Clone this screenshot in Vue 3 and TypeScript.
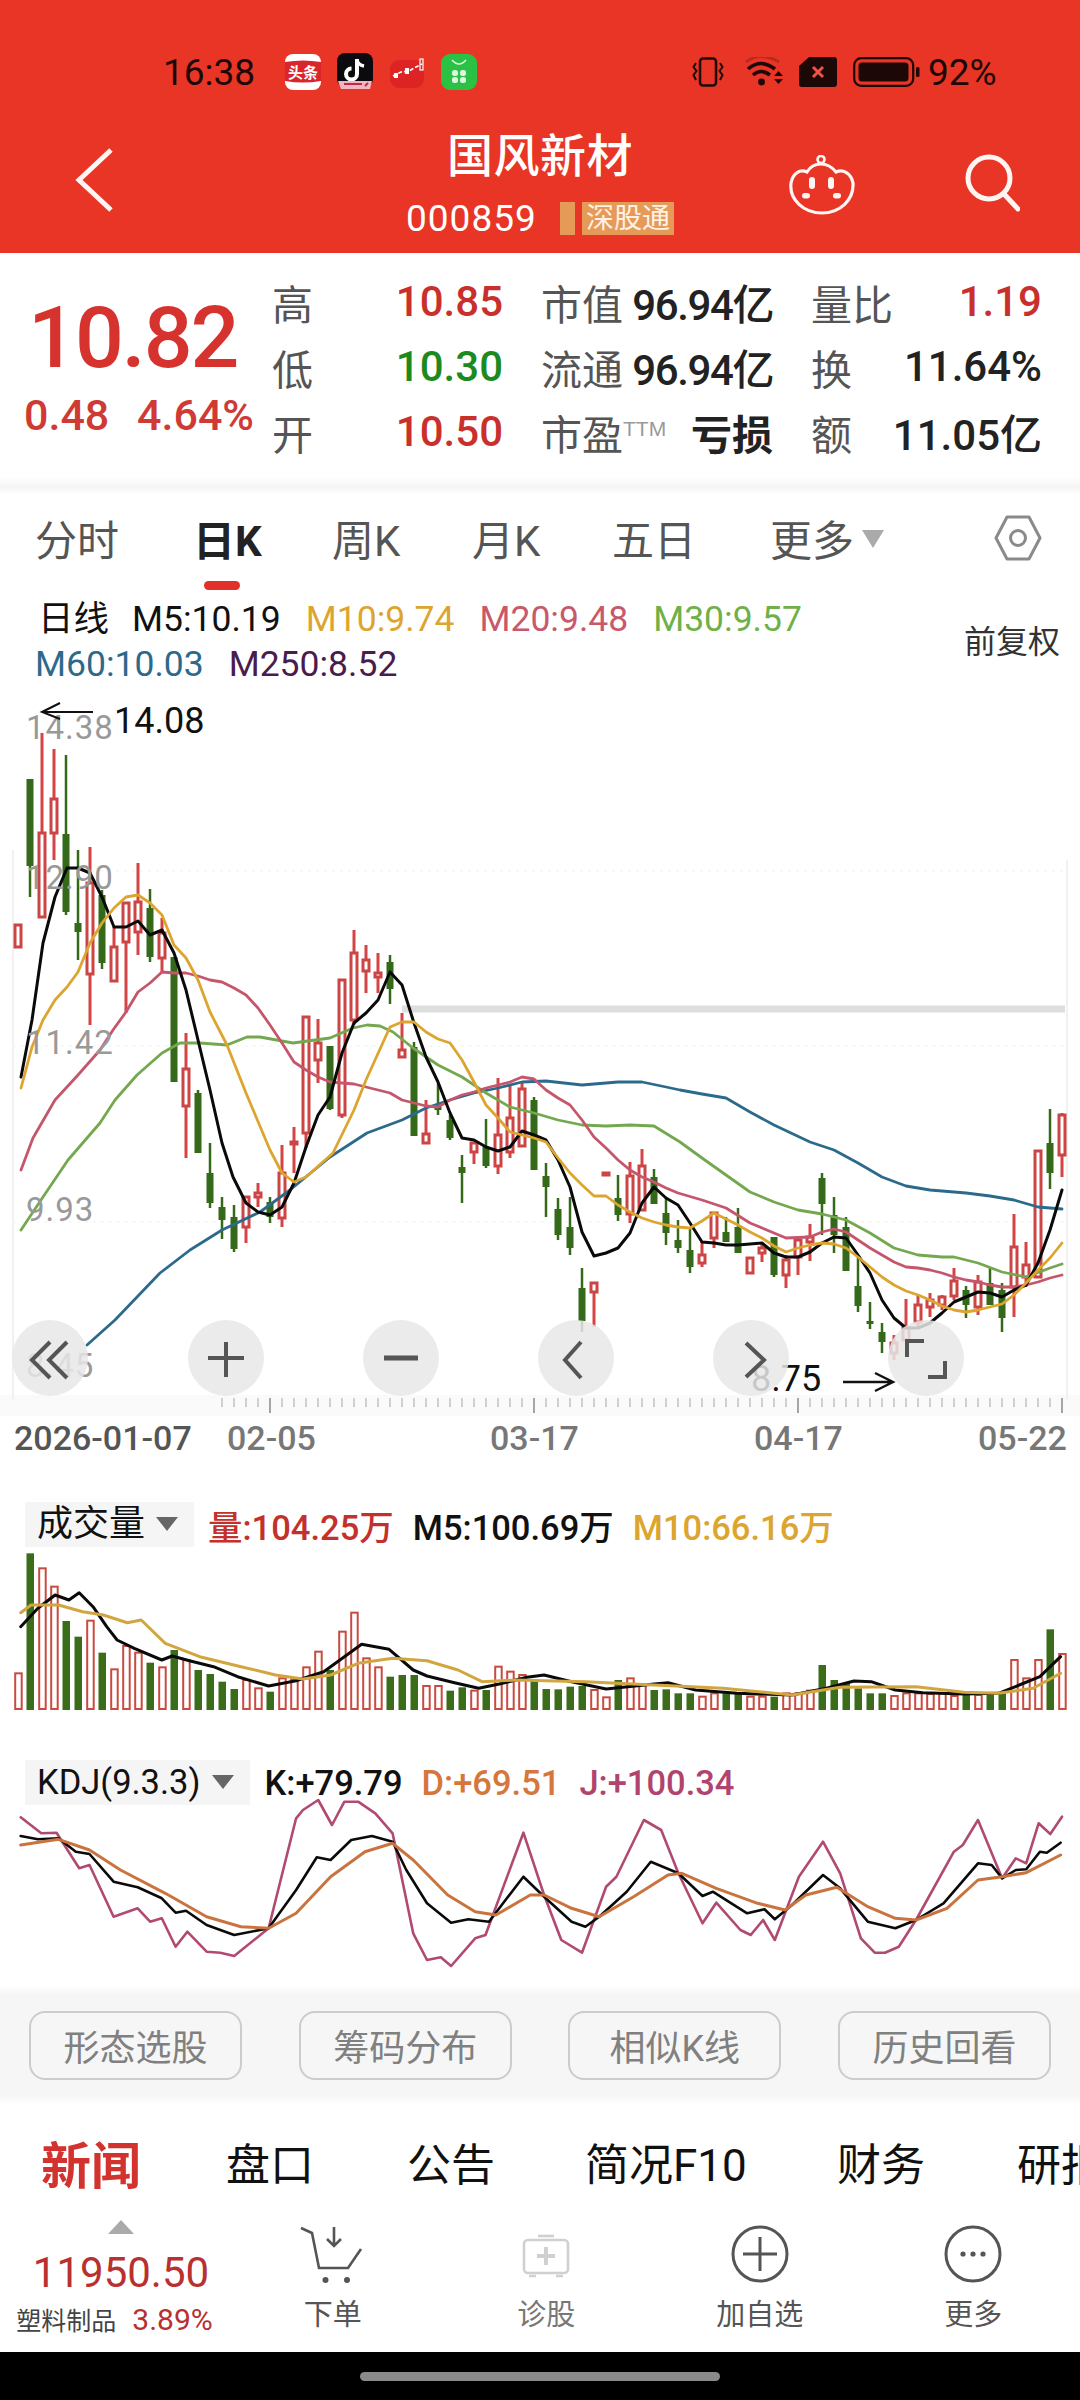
<template>
  <div class="page">
    <header class="top">
      <div class="status">
        <span class="clock">16:38</span>
        <div class="notify">
          <svg width="36" height="36" viewBox="0 0 36 36">
            <rect width="36" height="36" rx="8" fill="#fff" />
            <path d="M0 8 Q18 5 36 8 V27 Q18 30 0 27 Z" fill="#d8262c" />
            <text x="18" y="23.5" text-anchor="middle" class="mini-text">头条</text>
          </svg>
          <svg width="36" height="38" viewBox="0 0 36 38">
            <rect width="36" height="34" rx="8" fill="#0b0b0f" />
            <path d="M20 6 V21 A5.5 5.5 0 1 1 14.5 15.5" fill="none" stroke="#fff" stroke-width="4" />
            <path d="M20 7 Q21 12 27 13" fill="none" stroke="#fff" stroke-width="3.5" />
            <path d="M1 28 H35 L33 36 H4 Z" fill="#f2b6c0" />
            <path d="M7 31 H25 M28 33 L31 30" stroke="#c2274a" stroke-width="2" />
          </svg>
          <svg width="36" height="36" viewBox="0 0 36 36">
            <rect x="1" y="6" width="34" height="28" rx="9" fill="#dd2323" />
            <path d="M4 22 L12 18 L20 17 L27 13 L33 10" fill="none" stroke="#fff" stroke-width="1.6" stroke-dasharray="4 2" />
            <rect x="5" y="19" width="4" height="5" fill="#fff" />
            <rect x="16" y="14" width="4" height="6" fill="#fff" />
            <rect x="31" y="5" width="3" height="11" fill="none" stroke="#fff" stroke-width="1.2" />
          </svg>
          <svg width="36" height="36" viewBox="0 0 36 36">
            <rect width="36" height="36" rx="9" fill="#2bc144" />
            <path d="M11 6 Q18 14 25 6" fill="none" stroke="#e4f7e6" stroke-width="1.6" />
            <rect x="11" y="16" width="6" height="6" rx="2.5" fill="#dff5e2" />
            <rect x="19" y="16" width="6" height="6" rx="2.5" fill="#dff5e2" />
            <rect x="11" y="23" width="6" height="6" rx="2.5" fill="#dff5e2" />
            <rect x="19" y="23" width="6" height="6" rx="2.5" fill="#dff5e2" />
          </svg>
        </div>
        <div class="sys">
          <svg width="32" height="30" viewBox="0 0 32 30" fill="none" stroke="#1d0a08">
            <rect x="8" y="1.5" width="16" height="27" rx="3" stroke-width="2.5" />
            <path d="M4 6 L1.5 10 L4.5 14 L1.5 18 L4 23 M28 6 L30.5 10 L27.5 14 L30.5 18 L28 23" stroke-width="2" />
          </svg>
          <svg class="wifi" width="40" height="30" viewBox="0 0 40 30" fill="none" stroke="#1d0a08">
            <path d="M1 5 Q15 -6 34 5" stroke="#b92a20" stroke-width="3" />
            <path d="M3 12 Q16 1 30 12" stroke-width="3.6" />
            <path d="M8 18 Q16 11 25 18" stroke-width="3.6" />
            <circle cx="16.5" cy="25" r="3.4" fill="#1d0a08" stroke="none" />
            <path d="M29 19 L33.5 14 L38 19 Z M29 22 L33.5 27 L38 22 Z" fill="#1d0a08" stroke="none" />
          </svg>
          <svg class="sim" width="38" height="30" viewBox="0 0 38 30">
            <path d="M10 0 H35 Q38 0 38 3 V27 Q38 30 35 30 H3 Q0 30 0 27 V9 Z" fill="#1b0807" />
            <path d="M14 10 L24 20 M24 10 L14 20" stroke="#f0524a" stroke-width="3" />
          </svg>
          <svg class="battery" width="67" height="30" viewBox="0 0 67 30">
            <rect x="1.2" y="1.2" width="59" height="27.6" rx="7" fill="none" stroke="#1b0807" stroke-width="2.2" />
            <rect x="5.5" y="5.5" width="50" height="19" rx="3.5" fill="#1b0807" />
            <rect x="63" y="10" width="3.5" height="10" rx="1.5" fill="#1b0807" />
          </svg>
          <span class="pct">92%</span>
        </div>
      </div>
      <div class="nav">
        <svg class="back" width="40" height="66" viewBox="0 0 40 66">
          <path d="M36 3 L4 33 L36 63" fill="none" stroke="#fff5f2" stroke-width="5" />
        </svg>
        <div class="title">
          <div class="name">国风新材</div>
          <div class="sub">
            <span class="code">000859</span>
            <span class="stub"></span>
            <span class="tag">深股通</span>
          </div>
        </div>
        <div class="nav-right">
          <svg class="robot" width="68" height="62" viewBox="0 0 68 62" fill="none" stroke="#fff5f2" stroke-width="3.2">
            <circle cx="33" cy="4.5" r="3.5" stroke-width="2.6" />
            <path d="M33 9 C27 9 22 12 19 17 C12 14 5 18 3 28 C1 45 16 58 34 58 C52 58 66 45 65 28 C63 18 55 14 48 17 C44 12 39 9 33 9 Z" />
            <rect x="21" y="22" width="6" height="12" rx="3" fill="#fff5f2" stroke="none" />
            <rect x="40" y="22" width="6" height="12" rx="3" fill="#fff5f2" stroke="none" />
            <rect x="14" y="38" width="8" height="5.5" rx="2.7" fill="#fff5f2" stroke="none" />
            <rect x="45" y="38" width="8" height="5.5" rx="2.7" fill="#fff5f2" stroke="none" />
          </svg>
          <svg class="search" width="56" height="60" viewBox="0 0 56 60" fill="none" stroke="#fff5f2" stroke-width="5">
            <circle cx="25" cy="25" r="21" />
            <path d="M40 41 L54 56" stroke-linecap="round" />
          </svg>
        </div>
      </div>
    </header>

    <section class="quote">
      <div class="price">
        <div class="last">10.82</div>
        <div class="change"><span>0.48</span><span>4.64%</span></div>
      </div>
      <div class="stats">
        <div v-for="s in stats" :key="s.label" class="stat">
          <span class="stat-label">{{ s.label }}<sup v-if="s.sup">{{ s.sup }}</sup></span>
          <span class="stat-value" :class="s.tone">{{ s.value }}</span>
        </div>
      </div>
    </section>
    <div class="rule"></div>

    <nav class="periods">
      <span v-for="p in periods" :key="p" class="period" :class="{ on: p === '日K' }">
        {{ p }}<i v-if="p === '更多'" class="drop"></i>
      </span>
      <svg width="48" height="46" viewBox="0 0 48 46" fill="none" stroke="#8a8a8a" stroke-width="3">
        <path d="M13 2 H35 L46 23 L35 44 H13 L2 23 Z" stroke-linejoin="round" />
        <circle cx="24" cy="23" r="7.5" />
      </svg>
    </nav>

    <div class="legend">
      <div class="ma-rows">
        <div class="ma-row">
          <span class="cjk">日线</span>
          <span>M5:10.19</span>
          <span class="c-m10">M10:9.74</span>
          <span class="c-m20">M20:9.48</span>
          <span class="c-m30">M30:9.57</span>
        </div>
        <div class="ma-row">
          <span class="c-m60">M60:10.03</span>
          <span class="c-m250">M250:8.52</span>
        </div>
      </div>
      <span class="adjust">前复权</span>
    </div>

    <svg class="kline" width="1080" height="716" viewBox="0 700 1080 716">
      <rect x="0" y="1395" width="1080" height="21" fill="#fafafa" />
      <path d="M13 850 V1400 M1067 860 V1400" stroke="#f1f1f1" stroke-width="2" />
      <path d="M60 871 H1067 M13 1046 H1067 M13 1222 H1067" stroke="#f6f6f6" stroke-width="1.5" stroke-dasharray="3 5" />
      <rect x="402" y="1005.5" width="663" height="7" fill="#dedede" />

      <g v-for="(c, i) in candles" :key="i">
        <template v-if="c[0]">
          <path :d="`M${cx(i)} ${c[1]} V${c[2]} M${cx(i)} ${c[3]} V${c[4]}`" stroke="#d44444" stroke-width="3" />
          <rect :x="cx(i) - 3" :y="c[2]" width="6" :height="Math.max(c[3] - c[2], 2)" fill="#fff" stroke="#cc4545" stroke-width="3" />
        </template>
        <template v-else>
          <path :d="`M${cx(i)} ${c[1]} V${c[4]}`" stroke="#35691a" stroke-width="2.5" />
          <rect :x="cx(i) - 3.5" :y="c[2]" width="7" :height="c[3] - c[2]" fill="#35691a" />
        </template>
      </g>

      <polyline :points="m60" class="ma" stroke="#2c6a8c" stroke-width="2.8" />
      <polyline :points="m30" class="ma" stroke="#74a84f" stroke-width="2.8" />
      <polyline :points="m20" class="ma" stroke="#c5566c" stroke-width="2.8" />
      <polyline :points="m5" class="ma" stroke="#0a0a0a" stroke-width="3" />
      <polyline :points="m10" class="ma" stroke="#dca52f" stroke-width="2.8" />

      <text x="26" y="739" class="axis">14.38</text>
      <text x="26" y="889" class="axis">12.90</text>
      <text x="26" y="1054" class="axis">11.42</text>
      <text x="26" y="1221" class="axis">9.93</text>
      <text x="26" y="1377" class="axis">8.45</text>

      <path d="M93 712 H42 M60 703 L42 712 L60 719" fill="none" stroke="#111" stroke-width="2" />
      <text x="114" y="733" class="extreme">14.08</text>
      <text x="751" y="1391" class="extreme">8.75</text>
      <path d="M843 1382 H893 M875 1373 L893 1382 L875 1391" fill="none" stroke="#111" stroke-width="2.4" />

      <circle v-for="b in buttons" :key="b" :cx="b" cy="1358" r="38" fill="rgba(232,232,232,.85)" />
      <g fill="none" stroke="#555" stroke-width="4">
        <path d="M50 1342 L32 1360 L50 1378 M67 1342 L49 1360 L67 1378" />
        <path d="M208 1358 H244 M226 1342 V1377" />
        <path d="M384 1358 H418" stroke-width="5" />
        <path d="M581 1342 L565 1360 L581 1378" />
        <path d="M746 1343 L764 1360 L746 1377" />
        <path d="M907 1357 V1341 H924 M928 1377 H945 V1361" />
      </g>

      <line v-for="t in ticks" :key="t" :x1="t" :x2="t" y1="1398" :y2="(t - 270) % 264 === 0 ? 1413 : 1407" stroke="#a5a5a5" :stroke-width="(t - 270) % 264 === 0 ? 2 : 1" />
    </svg>

    <div class="dates">
      <span class="first">2026-01-07</span>
      <span>02-05</span>
      <span>03-17</span>
      <span>04-17</span>
      <span>05-22</span>
    </div>

    <div class="pane-head vol-head">
      <div class="picker">成交量<i class="drop dark"></i></div>
      <span class="c-red">量:104.25万</span>
      <span>M5:100.69万</span>
      <span class="c-m10">M10:66.16万</span>
    </div>
    <svg class="vol" width="1080" height="170" viewBox="0 1550 1080 170">
      <template v-for="(b, i) in volumes" :key="i">
        <rect v-if="b[0]" :x="cx(i) - 2.8" :y="topOf(b[1])" width="6.5" :height="1709 - topOf(b[1])" fill="#fff" stroke="#c94a40" stroke-width="2" />
        <rect v-else :x="cx(i) - 3.5" :y="topOf(b[1])" width="7.5" :height="1710 - topOf(b[1])" fill="#3b6c1a" />
      </template>
      <polyline :points="volM5" class="ma" stroke="#0a0a0a" stroke-width="3" />
      <polyline :points="volM10" class="ma" stroke="#d2a63f" stroke-width="3" />
    </svg>

    <div class="pane-head kdj-head">
      <div class="picker">KDJ(9.3.3)<i class="drop dark"></i></div>
      <span>K:+79.79</span>
      <span class="c-d">D:+69.51</span>
      <span class="c-j">J:+100.34</span>
    </div>
    <svg class="kdj" width="1080" height="175" viewBox="0 1805 1080 175">
      <polyline :points="kdjJ" class="ma" stroke="#b04a72" stroke-width="2.6" />
      <polyline :points="kdjK" class="ma" stroke="#0a0a0a" stroke-width="2.6" />
      <polyline :points="kdjD" class="ma" stroke="#c9743f" stroke-width="3" />
    </svg>

    <div class="tools">
      <button v-for="t in tools" :key="t" class="tool">{{ t }}</button>
    </div>

    <nav class="news">
      <span class="hot">新闻</span>
      <span>盘口</span>
      <span>公告</span>
      <span>简况F10</span>
      <span>财务</span>
      <span>研报</span>
    </nav>

    <footer class="actions">
      <div class="sector">
        <i class="up"></i>
        <div class="index">11950.50</div>
        <div class="sector-line"><span class="sector-name">塑料制品</span><span class="sector-pct">3.89%</span></div>
      </div>
      <div class="action">
        <svg width="72" height="64" viewBox="300 2224 72 64" fill="none" stroke="#555" stroke-width="2.6">
          <path d="M304 2228 L315 2233 L322 2268 H351 L364 2249" />
          <path d="M337 2227 V2246 M330 2239 L337 2246 L344 2239" />
          <circle cx="328.5" cy="2280" r="3" fill="#555" stroke="none" />
          <circle cx="350" cy="2280" r="3" fill="#555" stroke="none" />
        </svg>
        <span>下单</span>
      </div>
      <div class="action faded">
        <svg width="72" height="64" viewBox="511 2224 72 64" fill="none" stroke="#d0d0d0" stroke-width="2.6">
          <rect x="525" y="2240" width="44" height="33" rx="4" />
          <path d="M539 2236 H555" />
          <path d="M530 2276 H537 M557 2276 H564" />
          <path d="M538 2256 H556 M547 2247 V2265" stroke-width="4" />
        </svg>
        <span>诊股</span>
      </div>
      <div class="action">
        <svg width="72" height="64" viewBox="724 2224 72 64" fill="none" stroke="#555" stroke-width="3">
          <circle cx="760" cy="2254" r="27" />
          <path d="M743 2254 H777 M760 2237 V2271" />
        </svg>
        <span>加自选</span>
      </div>
      <div class="action">
        <svg width="72" height="64" viewBox="937 2224 72 64" fill="none" stroke="#555" stroke-width="3">
          <circle cx="973" cy="2254" r="27" />
          <circle cx="963" cy="2254" r="2.6" fill="#555" stroke="none" />
          <circle cx="973" cy="2254" r="2.6" fill="#555" stroke="none" />
          <circle cx="983" cy="2254" r="2.6" fill="#555" stroke="none" />
        </svg>
        <span>更多</span>
      </div>
    </footer>

    <div class="home"><div class="pill"></div></div>
  </div>
</template>

<script setup lang="ts">
type Candle = [number, number, number, number, number]

const stats = [
  { label: '高', value: '10.85', tone: 'rise' },
  { label: '市值', value: '96.94亿', tone: 'tight' },
  { label: '量比', value: '1.19', tone: 'rise' },
  { label: '低', value: '10.30', tone: 'fall' },
  { label: '流通', value: '96.94亿', tone: 'tight' },
  { label: '换', value: '11.64%', tone: '' },
  { label: '开', value: '10.50', tone: 'rise' },
  { label: '市盈', sup: 'TTM', value: '亏损', tone: 'strong' },
  { label: '额', value: '11.05亿', tone: '' },
]

const periods = ['分时', '日K', '周K', '月K', '五日', '更多']
const tools = ['形态选股', '筹码分布', '相似K线', '历史回看']
const buttons = [50, 226, 401, 576, 751, 926]
const ticks = Array.from({ length: 71 }, (_, i) => 222 + i * 12)

const cx = (i: number) => 18 + i * 12

// [rising, high, body top, body bottom, low] in chart pixels
const candles: Candle[] = [
  [1, 925, 925, 947, 947], [0, 779, 779, 866, 897], [1, 733, 833, 917, 917], [1, 749, 799, 833, 860],
  [0, 755, 834, 912, 915], [0, 850, 923, 932, 960], [1, 847, 883, 974, 1025], [0, 890, 895, 963, 969],
  [1, 927, 947, 981, 981], [1, 902, 903, 942, 1013], [1, 863, 902, 932, 955], [0, 889, 908, 957, 962],
  [1, 918, 933, 958, 972], [0, 957, 957, 1082, 1082], [1, 1033, 1069, 1106, 1158], [0, 1090, 1093, 1153, 1153],
  [0, 1143, 1173, 1203, 1208], [0, 1197, 1207, 1220, 1239], [0, 1205, 1217, 1249, 1252], [1, 1197, 1197, 1227, 1243],
  [1, 1183, 1193, 1197, 1207], [0, 1197, 1202, 1217, 1223], [1, 1145, 1173, 1218, 1227], [1, 1127, 1142, 1144, 1173],
  [1, 1017, 1017, 1133, 1148], [1, 1019, 1043, 1060, 1083], [0, 1046, 1046, 1109, 1110], [1, 980, 980, 1115, 1118],
  [1, 930, 953, 1020, 1025], [1, 945, 960, 971, 993], [1, 953, 973, 977, 993], [0, 955, 962, 989, 1004],
  [1, 1013, 1050, 1057, 1057], [0, 1042, 1047, 1136, 1136], [1, 1100, 1134, 1143, 1143], [0, 1083, 1107, 1110, 1115],
  [0, 1115, 1120, 1138, 1140], [0, 1155, 1167, 1173, 1203], [1, 1143, 1143, 1152, 1164], [0, 1119, 1147, 1166, 1168],
  [1, 1078, 1135, 1166, 1174], [1, 1085, 1118, 1152, 1158], [1, 1082, 1089, 1146, 1146], [0, 1097, 1100, 1170, 1170],
  [0, 1163, 1176, 1187, 1217], [0, 1198, 1209, 1235, 1240], [0, 1197, 1227, 1248, 1255], [0, 1268, 1288, 1321, 1332],
  [1, 1283, 1283, 1292, 1327], [1, 1173, 1173, 1175, 1175], [0, 1175, 1198, 1215, 1221], [1, 1162, 1176, 1214, 1223],
  [1, 1149, 1166, 1210, 1210], [0, 1169, 1177, 1204, 1204], [0, 1198, 1213, 1233, 1245], [0, 1220, 1240, 1248, 1253],
  [0, 1227, 1250, 1267, 1273], [1, 1242, 1255, 1263, 1267], [1, 1212, 1213, 1238, 1248], [0, 1217, 1232, 1242, 1242],
  [0, 1208, 1227, 1253, 1253], [1, 1258, 1258, 1273, 1273], [1, 1243, 1248, 1253, 1262], [0, 1237, 1237, 1275, 1277],
  [1, 1255, 1260, 1275, 1288], [1, 1238, 1240, 1257, 1275], [1, 1224, 1237, 1242, 1261], [0, 1173, 1178, 1204, 1235],
  [0, 1197, 1215, 1235, 1253], [0, 1217, 1227, 1271, 1271], [0, 1257, 1286, 1306, 1312], [0, 1302, 1321, 1324, 1329],
  [0, 1323, 1332, 1342, 1353], [1, 1335, 1343, 1353, 1360], [1, 1299, 1328, 1340, 1340], [1, 1295, 1305, 1322, 1327],
  [1, 1293, 1300, 1307, 1317], [1, 1295, 1297, 1305, 1310], [1, 1268, 1281, 1296, 1300], [0, 1286, 1290, 1305, 1318],
  [1, 1275, 1282, 1307, 1315], [0, 1268, 1283, 1305, 1305], [0, 1283, 1290, 1318, 1332], [1, 1214, 1247, 1287, 1317],
  [1, 1242, 1265, 1277, 1287], [1, 1151, 1151, 1277, 1277], [0, 1109, 1143, 1173, 1189], [1, 1113, 1115, 1155, 1177],
]

const m5 = `21,1077 32,1020 43,943 55,897 67,868 78,868 90,873 102,897 114,927 126,927 138,921 150,935 162,930 174,953
  186,990 198,1040 210,1090 222,1143 233,1177 246,1203 258,1212 270,1215 282,1207 294,1183 306,1147 318,1115 330,1097
  342,1053 354,1023 366,1013 378,1000 390,972 402,985 414,1023 426,1057 438,1082 450,1113 462,1138 474,1140 486,1147
  498,1151 510,1147 522,1131 534,1135 546,1140 558,1160 570,1187 582,1232 594,1256 606,1253 618,1248 630,1233 642,1203
  654,1187 666,1198 678,1205 690,1223 702,1242 714,1243 726,1245 738,1245 750,1244 762,1243 774,1253 786,1257 798,1257
  810,1252 822,1243 834,1237 846,1238 858,1255 870,1273 882,1300 894,1318 906,1328 918,1328 930,1323 942,1313 954,1302
  966,1297 978,1292 990,1293 1002,1297 1014,1290 1026,1285 1038,1263 1050,1230 1062,1190`

const m10 = `21,1088 32,1047 43,1020 55,1000 67,987 78,972 90,943 102,923 114,908 126,897 138,895 150,903 162,915 174,945
  186,958 198,980 210,1012 227,1045 246,1093 270,1150 282,1173 294,1182 306,1177 333,1153 354,1110 366,1080 390,1027
  402,1022 414,1022 426,1032 438,1039 450,1043 462,1060 474,1082 486,1105 498,1118 510,1132 522,1135 534,1138 546,1142
  558,1158 570,1173 582,1185 594,1196 606,1196 618,1205 630,1212 642,1218 654,1222 666,1225 678,1227 690,1228 702,1221
  714,1213 726,1219 738,1225 750,1232 762,1238 774,1246 786,1252 798,1248 810,1245 822,1243 834,1244 846,1248 858,1257
  870,1267 882,1277 894,1285 906,1291 918,1295 930,1300 942,1306 954,1310 966,1312 978,1310 990,1307 1002,1304 1014,1295
  1026,1283 1038,1270 1050,1258 1062,1243`

const m20 = `21,1170 33,1138 55,1100 78,1075 100,1050 113,1030 126,1012 138,992 150,983 162,972 174,973 186,973 198,976
  210,980 222,982 234,988 246,995 258,1008 270,1025 282,1043 294,1062 306,1070 318,1077 330,1082 342,1083 354,1084
  366,1087 378,1090 390,1093 402,1100 414,1103 426,1106 438,1107 450,1100 462,1095 474,1092 486,1088 498,1085 510,1082
  522,1077 534,1079 546,1090 558,1098 570,1105 582,1120 594,1137 606,1148 618,1160 630,1170 642,1177 654,1182 666,1188
  678,1193 702,1200 726,1208 750,1223 774,1233 786,1238 810,1237 822,1232 834,1229 846,1232 858,1240 870,1248 882,1255
  894,1262 906,1267 918,1268 930,1270 942,1273 954,1277 966,1280 978,1282 990,1285 1002,1287 1014,1287 1026,1285
  1038,1282 1050,1278 1062,1275`

const m30 = `21,1230 43,1197 68,1160 100,1123 115,1100 137,1075 162,1053 180,1043 200,1043 227,1045 247,1037 260,1037
  293,1043 330,1038 353,1028 367,1025 380,1026 393,1032 413,1048 438,1065 462,1077 486,1093 510,1107 534,1113 558,1120
  582,1125 606,1126 630,1125 654,1126 680,1142 702,1158 726,1175 750,1192 774,1202 798,1210 822,1214 846,1220 870,1233
  894,1248 918,1255 942,1257 954,1257 978,1263 1002,1272 1026,1277 1050,1268 1062,1264`

const m60 = `87,1345 115,1320 160,1273 190,1250 222,1230 260,1212 290,1190 330,1157 367,1133 402,1120 426,1108 450,1100
  474,1093 498,1088 522,1082 546,1081 582,1085 618,1082 642,1082 666,1087 680,1090 702,1094 726,1098 750,1112 774,1125
  810,1142 834,1150 858,1163 882,1177 906,1186 930,1190 966,1193 990,1196 1014,1200 1038,1207 1062,1209`

// lower pane traces are kept in a finer grid: 1.452 units per pixel across, 3 down
const toPoints = (raw: number[][], top: number) =>
  raw.map(([x, y]) => `${(x / 1.452).toFixed(1)},${(top + y / 3).toFixed(1)}`).join(' ')

const volM5 = toPoints([[30, 440], [55, 385], [80, 345], [100, 360], [115, 338], [135, 380], [155, 440], [170, 480], [195, 505], [235, 540], [250, 528], [275, 542], [310, 560], [345, 590], [390, 618], [430, 602], [470, 575], [500, 530], [525, 493], [565, 508], [600, 570], [620, 588], [660, 608], [695, 625], [725, 612], [765, 592], [790, 585], [830, 605], [880, 627], [950, 612], [970, 608], [1010, 630], [1070, 640], [1150, 645], [1200, 625], [1240, 603], [1265, 605], [1300, 630], [1340, 638], [1400, 642], [1450, 640], [1480, 615], [1510, 590], [1540, 530]], 1480)

const volM10 = toPoints([[30, 398], [45, 375], [85, 375], [120, 395], [150, 405], [185, 428], [205, 420], [240, 490], [290, 530], [350, 560], [400, 585], [440, 597], [480, 585], [520, 550], [570, 535], [620, 542], [665, 570], [700, 605], [750, 600], [850, 605], [950, 615], [1050, 625], [1150, 645], [1220, 622], [1330, 620], [1400, 637], [1450, 640], [1500, 625], [1540, 580]], 1480)

const kdjK = toPoints([[30, 1068], [55, 1078], [85, 1075], [110, 1115], [130, 1122], [165, 1205], [200, 1222], [235, 1255], [255, 1298], [270, 1292], [300, 1335], [340, 1365], [390, 1345], [430, 1230], [460, 1132], [480, 1140], [510, 1080], [540, 1068], [570, 1085], [590, 1170], [620, 1270], [655, 1328], [680, 1318], [710, 1325], [760, 1190], [790, 1250], [830, 1325], [850, 1340], [870, 1310], [910, 1235], [945, 1145], [985, 1180], [1020, 1248], [1035, 1235], [1085, 1300], [1110, 1288], [1125, 1318], [1150, 1275], [1195, 1185], [1220, 1225], [1260, 1325], [1300, 1345], [1330, 1320], [1370, 1270], [1420, 1150], [1440, 1155], [1455, 1195], [1475, 1170], [1490, 1168], [1510, 1115], [1520, 1118], [1540, 1088]], 1480)

const kdjD = toPoints([[30, 1095], [85, 1078], [130, 1110], [175, 1170], [240, 1240], [300, 1310], [350, 1340], [390, 1345], [430, 1300], [480, 1190], [530, 1115], [570, 1090], [600, 1140], [650, 1245], [690, 1295], [720, 1305], [770, 1245], [790, 1245], [830, 1285], [870, 1310], [920, 1250], [970, 1185], [990, 1180], [1040, 1225], [1100, 1270], [1140, 1290], [1170, 1245], [1215, 1222], [1260, 1280], [1300, 1315], [1330, 1320], [1375, 1285], [1420, 1200], [1455, 1190], [1490, 1178], [1540, 1125]], 1480)

const kdjJ = toPoints([[30, 1012], [60, 1060], [82, 1058], [115, 1165], [130, 1155], [165, 1310], [200, 1285], [218, 1325], [235, 1315], [255, 1400], [272, 1355], [300, 1415], [320, 1418], [340, 1428], [390, 1345], [430, 1015], [440, 990], [462, 960], [482, 1035], [500, 965], [520, 965], [545, 1000], [570, 1060], [600, 1360], [620, 1440], [640, 1432], [655, 1458], [690, 1375], [705, 1365], [760, 1058], [790, 1245], [815, 1380], [845, 1418], [880, 1220], [895, 1190], [935, 1020], [960, 1050], [985, 1180], [1020, 1330], [1040, 1268], [1075, 1350], [1090, 1365], [1108, 1320], [1125, 1380], [1160, 1190], [1195, 1085], [1220, 1180], [1250, 1375], [1270, 1418], [1285, 1418], [1305, 1400], [1330, 1320], [1385, 1115], [1398, 1095], [1420, 1020], [1455, 1195], [1475, 1135], [1490, 1150], [1508, 1030], [1525, 1062], [1542, 1010]], 1480)

// [rising, bar top] on the same fine grid
const topOf = (v: number) => 1480 + v / 3
const volumes: [number, number][] = [
  [1, 580], [0, 220], [1, 265], [1, 320], [0, 423], [0, 470], [1, 422], [0, 518], [1, 568], [1, 498], [1, 518], [0, 548],
  [1, 562], [0, 510], [1, 540], [0, 570], [0, 582], [0, 605], [0, 627], [1, 600], [1, 625], [0, 635], [1, 595], [1, 598],
  [1, 562], [1, 515], [0, 570], [1, 455], [1, 398], [1, 535], [1, 562], [0, 590], [0, 585], [0, 585], [1, 618], [1, 618],
  [0, 632], [0, 622], [1, 632], [0, 630], [1, 560], [1, 575], [1, 585], [0, 600], [0, 627], [0, 628], [0, 620], [0, 618],
  [1, 630], [1, 652], [0, 600], [1, 595], [1, 615], [0, 630], [0, 628], [0, 640], [0, 640], [1, 650], [1, 640], [0, 640],
  [0, 640], [1, 650], [1, 650], [0, 650], [1, 640], [1, 640], [1, 632], [0, 555], [0, 600], [0, 610], [0, 625], [0, 640],
  [0, 640], [1, 648], [1, 640], [1, 640], [1, 642], [1, 640], [1, 648], [0, 645], [1, 645], [0, 640], [0, 640], [1, 540],
  [1, 595], [1, 540], [0, 448], [1, 522],
]
</script>

<style scoped>
.page {
  width: 1080px;
  height: 2400px;
  overflow: hidden;
  background: #fff;
  font-family: Roboto, "Noto Sans CJK SC", sans-serif;
  color: #111;
}

.top {
  height: 253px;
  background: #e93525;
  display: flex;
  flex-direction: column;
}

.status {
  height: 113px;
  padding: 31px 0 0 163px;
  box-sizing: border-box;
  display: flex;
  align-items: center;
  color: #1b0807;
}

.clock {
  font-size: 37px;
  width: 122px;
}

.notify {
  display: flex;
  gap: 16px;
  align-items: center;
}

.sys {
  margin-left: 215px;
  display: flex;
  align-items: center;
}

.wifi {
  margin-left: 21px;
}

.sim {
  margin-left: 14px;
}

.battery {
  margin-left: 16px;
}

.pct {
  margin-left: 8px;
  font-size: 37px;
}

.nav {
  flex: 1;
  display: grid;
  grid-template-columns: 1fr auto 1fr;
  align-items: center;
  padding-bottom: 6px;
}

.back {
  margin-left: 75px;
}

.title {
  display: flex;
  flex-direction: column;
  align-items: center;
  color: #fff;
}

.name {
  font-size: 46px;
  font-weight: 500;
  line-height: 62px;
  letter-spacing: 0.5px;
}

.sub {
  display: flex;
  align-items: center;
  margin-top: 15px;
  height: 34px;
}

.code {
  font-size: 37px;
  letter-spacing: 1px;
  width: 154px;
}

.stub {
  width: 15px;
  height: 33px;
  background: #e69a58;
  margin-right: 7px;
}

.tag {
  width: 92px;
  height: 33px;
  line-height: 33px;
  text-align: center;
  background: #e69a58;
  font-size: 28px;
  color: #fff2e4;
}

.nav-right {
  display: flex;
  justify-content: flex-end;
  align-items: center;
  padding-right: 60px;
  gap: 108px;
}

.robot {
  margin-top: 12px;
}

.search {
  margin-top: 6px;
}

.quote {
  height: 224px;
  display: flex;
  align-items: flex-start;
  padding: 16px 0 0 24px;
  box-sizing: border-box;
}

.price {
  width: 248px;
  margin-top: 17px;
  color: #d6332e;
}

.last {
  font-size: 86px;
  font-weight: 500;
  line-height: 104px;
  padding-left: 4px;
  letter-spacing: -2px;
}

.change {
  display: flex;
  justify-content: space-between;
  width: 230px;
  margin-top: 1px;
  font-size: 43px;
  font-weight: 500;
  line-height: 48px;
  color: #cf3a35;
}

.stats {
  display: grid;
  grid-template-columns: 231px 232px 231px;
  grid-auto-rows: 65px;
  column-gap: 38px;
}

.stat {
  display: flex;
  justify-content: space-between;
  align-items: center;
  font-size: 41px;
}

.stat-label {
  color: #555;
  white-space: nowrap;
}

.stat-label sup {
  font-size: 21px;
  color: #999;
  vertical-align: 14px;
  line-height: 0;
  font-family: "Liberation Sans", sans-serif;
}

.stat-value {
  color: #222;
  font-size: 42px;
  font-weight: 500;
  white-space: nowrap;
}

.stat-value.tight {
  letter-spacing: -1.4px;
}

.stat-value.rise {
  color: #c9302c;
}

.stat-value.fall {
  color: #1d8a1f;
}

.stat-value.strong {
  font-size: 41px;
  font-weight: 700;
  color: #222;
}

.rule {
  height: 18px;
  background: linear-gradient(#fff, #f5f5f5 55%, #fff);
}

.periods {
  height: 91px;
  box-sizing: border-box;
  padding: 0 36px 6px 35px;
  display: grid;
  grid-template-columns: 158px 139px 140px 140px 158px 224px auto;
  align-items: center;
  font-size: 42px;
  color: #555;
}

.period {
  position: relative;
  white-space: nowrap;
}

.period.on {
  color: #222;
  font-weight: 700;
}

.period.on::after {
  content: "";
  position: absolute;
  left: 11px;
  bottom: -22px;
  width: 36px;
  height: 9px;
  border-radius: 5px;
  background: #e1312a;
}

.drop {
  display: inline-block;
  vertical-align: 8px;
  margin-left: 8px;
  border-left: 11px solid transparent;
  border-right: 11px solid transparent;
  border-top: 18px solid #aaa;
}

.drop.dark {
  border-top-color: #666;
  border-left-width: 11px;
  border-right-width: 11px;
  border-top-width: 14px;
  vertical-align: 5px;
  margin-left: 11px;
}

.legend {
  height: 114px;
  box-sizing: border-box;
  padding: 11px 20px 0 35px;
  display: flex;
  justify-content: space-between;
  font-size: 35.5px;
}

.ma-row {
  display: flex;
  gap: 25px;
  height: 45px;
  line-height: 45px;
  white-space: nowrap;
}

.ma-row .cjk {
  padding-left: 3px;
  margin-right: -2px;
}

.adjust {
  margin-top: 23px;
  font-size: 32px;
  line-height: 45px;
  color: #333;
}

.c-m10 {
  color: #dca52f;
}

.c-m20 {
  color: #c9586b;
}

.c-m30 {
  color: #6fb04a;
}

.c-m60 {
  color: #2c6a8c;
}

.c-m250 {
  color: #4a1b4d;
}

.c-red {
  color: #c4302b;
}

.c-d {
  color: #d5763c;
}

.c-j {
  color: #b0446f;
}

.kline,
.vol,
.kdj {
  display: block;
  overflow: visible;
}

.ma {
  fill: none;
  stroke-linejoin: round;
  stroke-linecap: round;
}

.axis {
  font-family: Roboto, sans-serif;
  font-size: 33px;
  letter-spacing: 1px;
  fill: #999;
}

.extreme {
  font-family: Roboto, sans-serif;
  font-size: 36px;
  fill: #111;
}

.mini-text {
  font-family: "Noto Sans CJK SC", sans-serif;
  font-size: 15px;
  font-weight: 700;
  fill: #fff;
}

.dates {
  height: 44px;
  box-sizing: border-box;
  padding-left: 14px;
  display: grid;
  grid-template-columns: 213px 263px 264px 224px auto;
  align-items: center;
  font-size: 34px;
  font-weight: 500;
  color: #777;
}

.dates .first {
  color: #555;
}

.pane-head {
  display: flex;
  align-items: center;
  height: 45px;
  font-size: 34.5px;
  font-weight: 500;
  white-space: nowrap;
  padding-left: 25px;
}

.vol-head {
  margin-top: 42px;
  margin-bottom: 3px;
  gap: 19px;
}

.kdj-head {
  margin-top: 40px;
  gap: 19px;
}

.picker {
  background: #f5f5f5;
  height: 45px;
  line-height: 45px;
  padding-left: 12px;
  padding-right: 16px;
  font-size: 36px;
  font-weight: 400;
  margin-right: -5px;
}

.kdj-head .picker {
  font-size: 34.5px;
  margin-right: -4px;
}

.tools {
  height: 120px;
  margin-top: 5px;
  padding: 0 29px;
  display: flex;
  justify-content: space-between;
  align-items: center;
  background: linear-gradient(#fff, #f6f6f6 8%, #f6f6f6 92%, #fff);
}

.tool {
  width: 213px;
  height: 69px;
  border: 2px solid #ccc;
  border-radius: 16px;
  background: #f6f6f6;
  font-family: inherit;
  font-size: 36px;
  color: #808080;
  padding: 0;
}

.news {
  height: 100px;
  box-sizing: border-box;
  padding: 14px 0 0 41px;
  display: grid;
  grid-template-columns: 185px 181px 178px 252px 180px 100px;
  align-items: center;
  font-size: 44px;
  color: #111;
  white-space: nowrap;
  overflow: hidden;
}

.hot {
  font-size: 50px;
  font-weight: 700;
  color: #d2332f;
}

.actions {
  height: 147px;
  display: grid;
  grid-template-columns: 226px repeat(4, 213.5px);
}

.sector {
  display: flex;
  flex-direction: column;
  align-items: center;
  padding-top: 15px;
}

.up {
  border-left: 13px solid transparent;
  border-right: 13px solid transparent;
  border-bottom: 14px solid #aaa;
  margin-left: 16px;
}

.index {
  font-size: 42px;
  line-height: 50px;
  color: #b9302e;
  margin-top: 14px;
  margin-left: 16px;
}

.sector-line {
  margin-top: 3px;
  margin-left: 3px;
  display: flex;
  align-items: baseline;
  gap: 16px;
  white-space: nowrap;
}

.sector-name {
  font-size: 25px;
  color: #444;
}

.sector-pct {
  font-size: 30px;
  color: #b9302e;
}

.action {
  display: flex;
  flex-direction: column;
  align-items: center;
  padding-top: 19px;
  font-size: 29px;
  line-height: 40px;
  color: #555;
}

.action span {
  margin-top: 7px;
}

.action.faded span {
  color: #777;
}

.home {
  height: 48px;
  background: #000;
  display: flex;
  justify-content: center;
  align-items: center;
}

.pill {
  width: 360px;
  height: 9px;
  border-radius: 5px;
  background: #8a8a8a;
}
</style>

<style>
body {
  background: #fff;
}
</style>
